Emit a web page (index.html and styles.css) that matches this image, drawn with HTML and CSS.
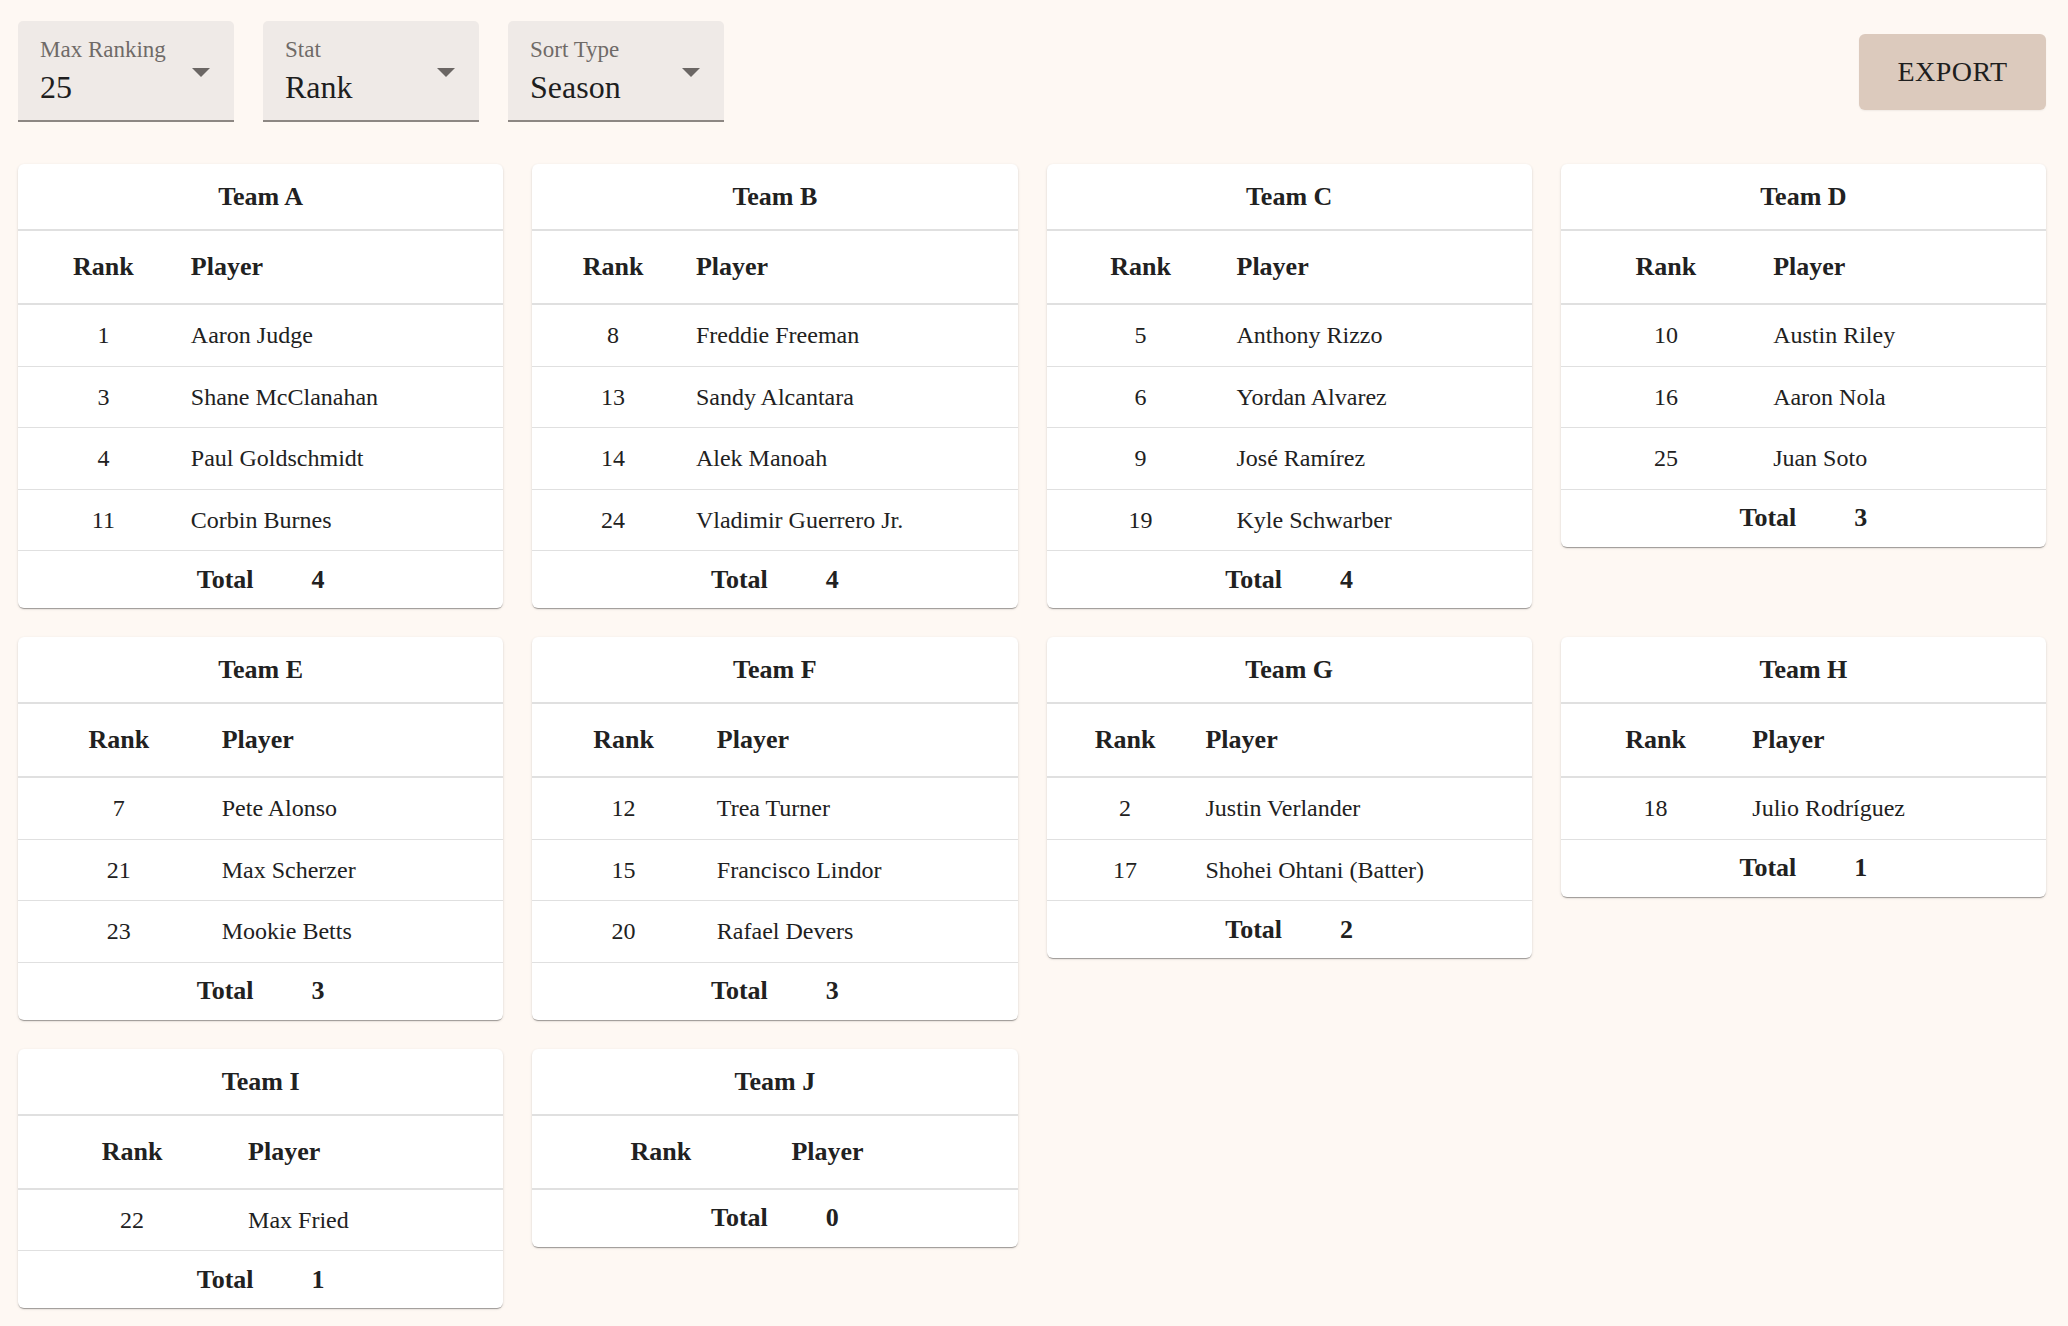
FILE: index.html
```html
<!DOCTYPE html>
<html lang="en">
<head>
<meta charset="utf-8">
<title>Rankings</title>
<link rel="stylesheet" href="styles.css">
</head>
<body>
<div class="page">
  <div class="toolbar">
    <div class="filters">
      <div class="select">
        <div class="select-text"><span class="select-label">Max Ranking</span><span class="select-value">25</span></div>
        <svg class="arrow" width="18" height="9" viewBox="0 0 18 9"><polygon points="0,0 18,0 9,9"/></svg>
      </div>
      <div class="select">
        <div class="select-text"><span class="select-label">Stat</span><span class="select-value">Rank</span></div>
        <svg class="arrow" width="18" height="9" viewBox="0 0 18 9"><polygon points="0,0 18,0 9,9"/></svg>
      </div>
      <div class="select">
        <div class="select-text"><span class="select-label">Sort Type</span><span class="select-value">Season</span></div>
        <svg class="arrow" width="18" height="9" viewBox="0 0 18 9"><polygon points="0,0 18,0 9,9"/></svg>
      </div>
    </div>
    <button class="export">EXPORT</button>
  </div>

  <div class="grid">
    <div class="card">
      <div class="card-title">Team A</div>
      <table class="tbl">
        <thead><tr><th class="c-rank">Rank</th><th class="c-player">Player</th></tr></thead>
        <tbody>
          <tr><td class="c-rank">1</td><td class="c-player">Aaron Judge</td></tr>
          <tr><td class="c-rank">3</td><td class="c-player">Shane McClanahan</td></tr>
          <tr><td class="c-rank">4</td><td class="c-player">Paul Goldschmidt</td></tr>
          <tr><td class="c-rank">11</td><td class="c-player">Corbin Burnes</td></tr>
        </tbody>
      </table>
      <div class="total"><span>Total</span><span>4</span></div>
    </div>

    <div class="card">
      <div class="card-title">Team B</div>
      <table class="tbl">
        <thead><tr><th class="c-rank">Rank</th><th class="c-player">Player</th></tr></thead>
        <tbody>
          <tr><td class="c-rank">8</td><td class="c-player">Freddie Freeman</td></tr>
          <tr><td class="c-rank">13</td><td class="c-player">Sandy Alcantara</td></tr>
          <tr><td class="c-rank">14</td><td class="c-player">Alek Manoah</td></tr>
          <tr><td class="c-rank">24</td><td class="c-player">Vladimir Guerrero Jr.</td></tr>
        </tbody>
      </table>
      <div class="total"><span>Total</span><span>4</span></div>
    </div>

    <div class="card">
      <div class="card-title">Team C</div>
      <table class="tbl">
        <thead><tr><th class="c-rank">Rank</th><th class="c-player">Player</th></tr></thead>
        <tbody>
          <tr><td class="c-rank">5</td><td class="c-player">Anthony Rizzo</td></tr>
          <tr><td class="c-rank">6</td><td class="c-player">Yordan Alvarez</td></tr>
          <tr><td class="c-rank">9</td><td class="c-player">José Ramírez</td></tr>
          <tr><td class="c-rank">19</td><td class="c-player">Kyle Schwarber</td></tr>
        </tbody>
      </table>
      <div class="total"><span>Total</span><span>4</span></div>
    </div>

    <div class="card">
      <div class="card-title">Team D</div>
      <table class="tbl">
        <thead><tr><th class="c-rank">Rank</th><th class="c-player">Player</th></tr></thead>
        <tbody>
          <tr><td class="c-rank">10</td><td class="c-player">Austin Riley</td></tr>
          <tr><td class="c-rank">16</td><td class="c-player">Aaron Nola</td></tr>
          <tr><td class="c-rank">25</td><td class="c-player">Juan Soto</td></tr>
        </tbody>
      </table>
      <div class="total"><span>Total</span><span>3</span></div>
    </div>

    <div class="card">
      <div class="card-title">Team E</div>
      <table class="tbl">
        <thead><tr><th class="c-rank">Rank</th><th class="c-player">Player</th></tr></thead>
        <tbody>
          <tr><td class="c-rank">7</td><td class="c-player">Pete Alonso</td></tr>
          <tr><td class="c-rank">21</td><td class="c-player">Max Scherzer</td></tr>
          <tr><td class="c-rank">23</td><td class="c-player">Mookie Betts</td></tr>
        </tbody>
      </table>
      <div class="total"><span>Total</span><span>3</span></div>
    </div>

    <div class="card">
      <div class="card-title">Team F</div>
      <table class="tbl">
        <thead><tr><th class="c-rank">Rank</th><th class="c-player">Player</th></tr></thead>
        <tbody>
          <tr><td class="c-rank">12</td><td class="c-player">Trea Turner</td></tr>
          <tr><td class="c-rank">15</td><td class="c-player">Francisco Lindor</td></tr>
          <tr><td class="c-rank">20</td><td class="c-player">Rafael Devers</td></tr>
        </tbody>
      </table>
      <div class="total"><span>Total</span><span>3</span></div>
    </div>

    <div class="card">
      <div class="card-title">Team G</div>
      <table class="tbl">
        <thead><tr><th class="c-rank">Rank</th><th class="c-player">Player</th></tr></thead>
        <tbody>
          <tr><td class="c-rank">2</td><td class="c-player">Justin Verlander</td></tr>
          <tr><td class="c-rank">17</td><td class="c-player">Shohei Ohtani (Batter)</td></tr>
        </tbody>
      </table>
      <div class="total"><span>Total</span><span>2</span></div>
    </div>

    <div class="card">
      <div class="card-title">Team H</div>
      <table class="tbl">
        <thead><tr><th class="c-rank">Rank</th><th class="c-player">Player</th></tr></thead>
        <tbody>
          <tr><td class="c-rank">18</td><td class="c-player">Julio Rodríguez</td></tr>
        </tbody>
      </table>
      <div class="total"><span>Total</span><span>1</span></div>
    </div>

    <div class="card">
      <div class="card-title">Team I</div>
      <table class="tbl">
        <thead><tr><th class="c-rank">Rank</th><th class="c-player">Player</th></tr></thead>
        <tbody>
          <tr><td class="c-rank">22</td><td class="c-player">Max Fried</td></tr>
        </tbody>
      </table>
      <div class="total"><span>Total</span><span>1</span></div>
    </div>

    <div class="card">
      <div class="card-title">Team J</div>
      <table class="tbl">
        <thead><tr><th class="c-rank">Rank</th><th class="c-player">Player</th></tr></thead>
        <tbody></tbody>
      </table>
      <div class="total"><span>Total</span><span>0</span></div>
    </div>
  </div>
</div>
</body>
</html>
```

FILE: styles.css
```css
html, body {
  margin: 0;
  padding: 0;
}

body {
  background: #fef8f3;
  font-family: "Liberation Serif", "DejaVu Serif", serif;
  color: #212121;
}

.page {
  padding: 21px 22px 40px 18px;
}

.toolbar {
  display: flex;
  align-items: center;
  justify-content: space-between;
}

.filters {
  display: flex;
  gap: 29px;
}

.select {
  width: 216px;
  height: 101px;
  box-sizing: border-box;
  background: #efeae7;
  border-radius: 5px 5px 0 0;
  border-bottom: 2px solid #8d8783;
  display: flex;
  align-items: center;
  padding: 0 24px 0 22px;
}

.select-text {
  flex: 1;
  display: flex;
  flex-direction: column;
}

.select-label {
  font-size: 23px;
  line-height: 26px;
  color: #6f6a67;
}

.select-value {
  font-size: 32px;
  line-height: 36px;
  margin-top: 6px;
  color: #1e1e1e;
}

.arrow {
  fill: #6b6664;
  margin-top: 3px;
  flex: none;
}

.export {
  width: 187px;
  height: 76px;
  border: none;
  border-radius: 6px;
  background: #dccabd;
  color: #1e1e1e;
  font-family: "Liberation Serif", "DejaVu Serif", serif;
  font-size: 28px;
  letter-spacing: 0.5px;
  padding: 0;
  box-shadow: 0 1px 2px rgba(0, 0, 0, 0.06);
}

.grid {
  margin-top: 42px;
  display: grid;
  grid-template-columns: repeat(4, 1fr);
  column-gap: 29px;
  row-gap: 29px;
  align-items: start;
}

.card {
  background: #ffffff;
  border-radius: 6px;
  overflow: hidden;
  box-shadow: 0 2px 1px -1px rgba(0, 0, 0, 0.22), 0 1px 1px 0 rgba(0, 0, 0, 0.14), 0 1px 3px 0 rgba(0, 0, 0, 0.12);
}

.card-title {
  height: 65px;
  line-height: 65px;
  text-align: center;
  font-size: 26px;
  font-weight: bold;
  border-bottom: 2px solid #e0e0e0;
}

.tbl {
  width: 100%;
  border-collapse: separate;
  border-spacing: 0;
}

.tbl th,
.tbl td {
  padding: 0;
  white-space: nowrap;
}

.tbl th {
  font-size: 26px;
  font-weight: bold;
  line-height: 72px;
  border-bottom: 2px solid #e0e0e0;
}

.tbl td {
  font-size: 24px;
  line-height: 60.5px;
  border-bottom: 1px solid #e0e0e0;
}

.tbl .c-rank {
  text-align: center;
  padding: 0 15px 0 29px;
}

.tbl .c-player {
  text-align: left;
  padding: 0 16px;
}

.total {
  height: 57px;
  display: flex;
  align-items: center;
  justify-content: center;
  gap: 58px;
  font-size: 26px;
  font-weight: bold;
}
```
